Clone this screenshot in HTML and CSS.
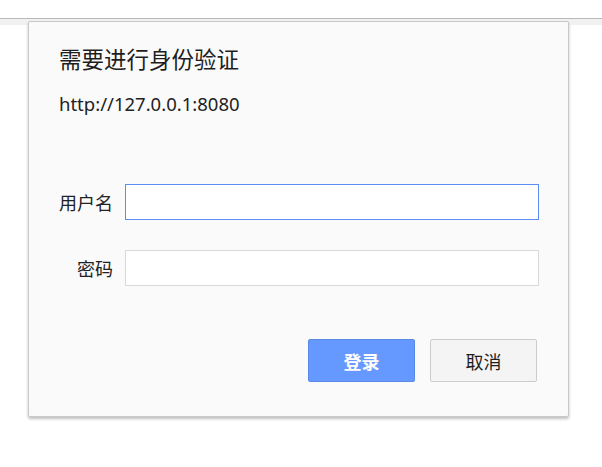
FILE: index.html
```html
<!DOCTYPE html>
<html lang="zh-CN">
<head>
    <meta charset="UTF-8">
    <meta name="viewport" content="width=device-width, initial-scale=1.0">
    <title>需要进行身份验证</title>
    <link rel="stylesheet" href="styles.css">
</head>
<body>
    <div class="toolbar"></div>
    <div class="toolbar-shade"></div>

    <div class="auth-dialog">
        <h1 class="auth-title">需要进行身份验证</h1>
        <p class="auth-origin">http://127.0.0.1:8080</p>

        <form class="auth-form">
            <div class="field">
                <label class="field-label" for="username">用户名</label>
                <input class="field-input focused" id="username" type="text">
            </div>
            <div class="field">
                <label class="field-label" for="password">密码</label>
                <input class="field-input" id="password" type="password">
            </div>
            <div class="actions">
                <button class="btn btn-primary" type="submit">登录</button>
                <button class="btn btn-cancel" type="button">取消</button>
            </div>
        </form>
    </div>
</body>
</html>
```

FILE: styles.css
```css
body {
    margin: 0;
    background: #ffffff;
    font-family: "Microsoft YaHei", "Noto Sans CJK SC", "Noto Sans", sans-serif;
    color: #222222;
}
.toolbar {
    height: 18px;
    border-bottom: 1px solid #b9b9b9;
}
.toolbar-shade {
    height: 6px;
    background: #f1f1f1;
}
.auth-dialog {
    position: absolute;
    left: 28px;
    top: 21px;
    width: 480px;
    padding: 22px 29px 34px 30px;
    background: #fafafa;
    border: 1px solid #c9c9c9;
    border-radius: 2px;
    box-shadow: 0 2px 3px rgba(0, 0, 0, 0.25);
}
.auth-title {
    margin: 0;
    font-size: 22.5px;
    font-weight: normal;
    line-height: 28px;
    color: #1e1e1e;
}
.auth-origin {
    margin: 20px 0 0 0;
    font-family: "Noto Sans", "Noto Sans CJK SC", sans-serif;
    font-size: 18.5px;
    line-height: 24px;
}
.auth-form {
    margin-top: 68px;
}
.field {
    display: flex;
    align-items: center;
    gap: 12px;
    margin-bottom: 30px;
}
.field-label {
    flex-shrink: 0;
    width: 54px;
    white-space: nowrap;
    text-align: right;
    font-size: 18px;
}
.field-input {
    box-sizing: border-box;
    flex-shrink: 0;
    width: 414px;
    height: 36px;
    margin: 0;
    border: 1px solid #d9d9d9;
    background: #ffffff;
    outline: none;
}
.field-input.focused {
    border-color: #5b8df5;
}
.actions {
    display: flex;
    justify-content: flex-end;
    gap: 15px;
    margin-top: 53px;
    padding-right: 2px;
}
.btn {
    box-sizing: border-box;
    width: 107px;
    height: 43px;
    border-radius: 2px;
    font-family: inherit;
    font-size: 18px;
    cursor: pointer;
}
.btn-primary {
    background: #6699ff;
    border: 1px solid #5a8ae8;
    color: #ffffff;
    font-weight: bold;
}
.btn-cancel {
    background: #f4f4f4;
    border: 1px solid #cccccc;
    color: #1e1e1e;
}
```
